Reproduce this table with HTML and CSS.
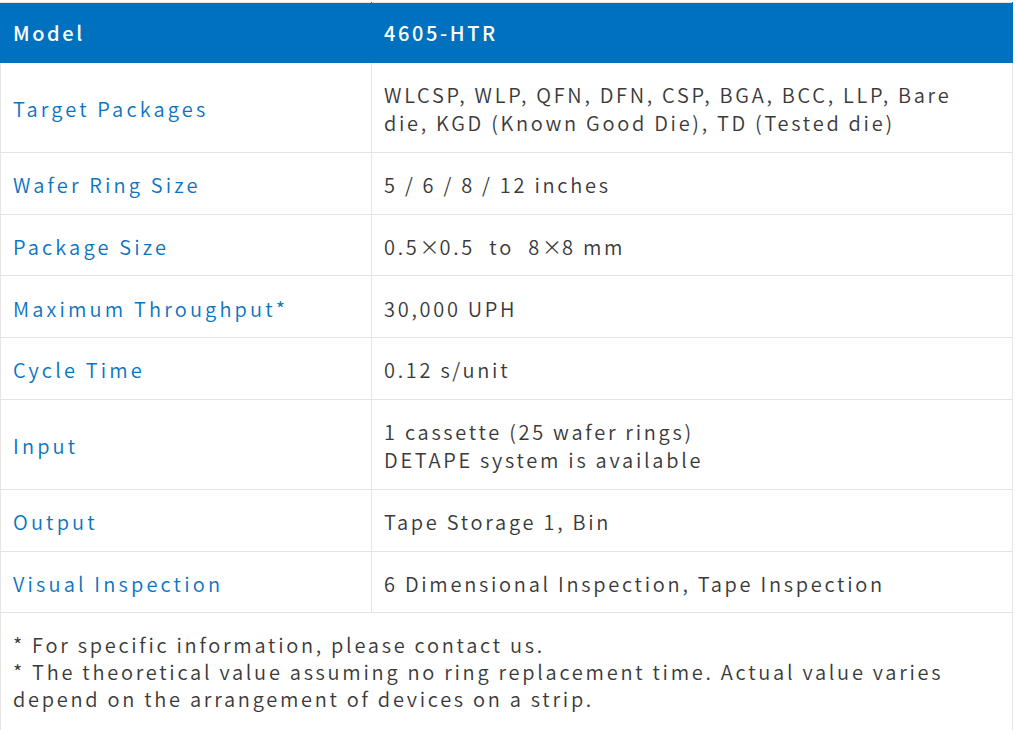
FILE: index.html
```html
<!DOCTYPE html>
<html lang="en">
<head>
<meta charset="utf-8">
<title>4605-HTR Specifications</title>
<link rel="stylesheet" href="styles.css">
</head>
<body>
<div class="wrap">
<table class="spec">
  <thead>
    <tr><th class="lbl">Model</th><th class="val">4605-HTR</th></tr>
  </thead>
  <tbody>
    <tr><td class="lbl">Target Packages</td><td class="val">WLCSP, WLP, QFN, DFN, CSP, BGA, BCC, LLP, Bare die, KGD (Known Good Die), TD (Tested die)</td></tr>
    <tr><td class="lbl">Wafer Ring Size</td><td class="val">5 / 6 / 8 / 12 inches</td></tr>
    <tr><td class="lbl">Package Size</td><td class="val">0.5<span class="x">×</span>0.5&nbsp; to&nbsp; 8<span class="x">×</span>8 mm</td></tr>
    <tr><td class="lbl">Maximum Throughput*</td><td class="val">30,000 UPH</td></tr>
    <tr><td class="lbl">Cycle Time</td><td class="val">0.12 s/unit</td></tr>
    <tr><td class="lbl">Input</td><td class="val">1 cassette (25 wafer rings)<br>DETAPE system is available</td></tr>
    <tr><td class="lbl">Output</td><td class="val">Tape Storage 1, Bin</td></tr>
    <tr><td class="lbl">Visual Inspection</td><td class="val">6 Dimensional Inspection, Tape Inspection</td></tr>
    <tr><td class="note" colspan="2">* For specific information, please contact us.<br>* The theoretical value assuming no ring replacement time. Actual value varies depend on the arrangement of devices on a strip.</td></tr>
  </tbody>
</table>
</div>
</body>
</html>
```
FILE: styles.css
```css
html, body {
  margin: 0;
  padding: 0;
  background: #ffffff;
}
body {
  font-family: "Noto Sans CJK JP", "Noto Sans", sans-serif;
  font-size: 20px;
  color: #3a3a3a;
}
.wrap {
  padding: 2px 0 0 0;
  width: 1013px;
}
.spec {
  width: 1013px;
  border-collapse: collapse;
  table-layout: fixed;
  letter-spacing: 0.136em;
  line-height: 27.5px;
}
.spec th, .spec td {
  border: 1px solid #e4e4e4;
  text-align: left;
  vertical-align: middle;
  padding: 18.1px 12px 15.3px 12px;
  font-weight: 350;
}
.spec th {
  background: #0071bf;
  color: #ffffff;
  font-weight: 500;
  letter-spacing: 0.13em;
  padding-top: 16.3px;
  padding-bottom: 15.5px;
  border-color: #0071bf;
  border-top-color: #e4e4e4;
}
.spec th + th {
  border-left: 1px solid #ffffff;
}
.spec .lbl {
  width: 346px;
}
.spec td.lbl {
  color: #0b74c2;
  letter-spacing: 0.158em;
}
.spec td.val {
  color: #3a3a3a;
}
.x {
  font-family: "Noto Sans CJK JP", sans-serif;
  letter-spacing: 0;
}
.spec td.note {
  padding-top: 17.5px;
  padding-bottom: 30px;
  line-height: 27px;
  color: #3a3a3a;
}
```
